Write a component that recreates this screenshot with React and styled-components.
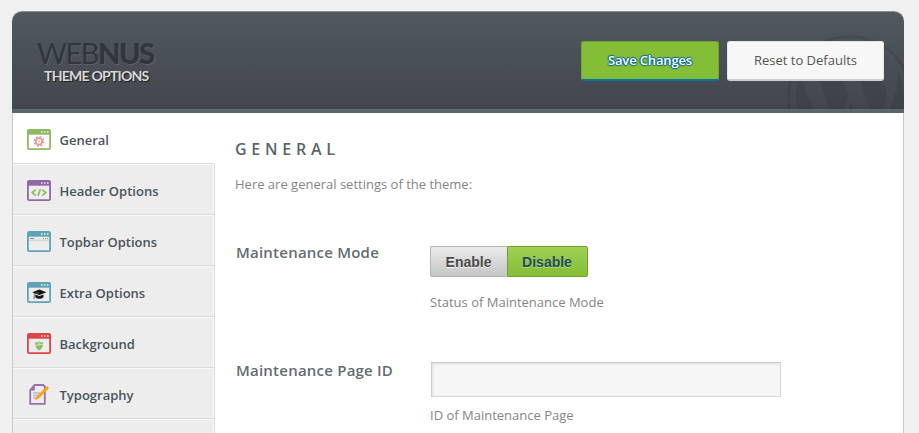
import React from "react";
import styled, { createGlobalStyle } from "styled-components";
import { FaWordpress } from "react-icons/fa";

const GlobalStyle = createGlobalStyle`
  * { box-sizing: border-box; }
  body {
    margin: 0;
    background: #f0f0f0;
    font-family: "Open Sans", sans-serif;
    overflow: hidden;
  }
`;

const Page = styled.div`
  height: 433px;
  padding: 11px 15px 0 12px;
  overflow: hidden;
`;

const Panel = styled.div`
  display: flex;
  flex-direction: column;
  height: 100%;
`;

const Header = styled.header`
  position: relative;
  display: flex;
  justify-content: space-between;
  align-items: flex-start;
  height: 102px;
  flex: none;
  padding: 29px 20px 0 25px;
  border-top: 1px solid #8b8f92;
  border-bottom: 4px solid #5b656b;
  border-radius: 10px 10px 0 0;
  background: linear-gradient(#50585e, #43464e);
  overflow: hidden;
`;

const Watermark = styled(FaWordpress)`
  position: absolute;
  top: 21px;
  right: -11px;
  width: 130px;
  height: 130px;
  color: rgba(20, 24, 34, 0.1);
`;

const Brand = styled.div`
  display: flex;
  flex-direction: column;
  font-family: Lato, sans-serif;
`;

const BrandName = styled.div`
  height: 26px;
  margin-top: -5px;
  font-size: 29px;
  line-height: 34px;
  letter-spacing: -1.5px;
  color: #32363a;
  text-shadow: 1px 1px 0 #596067;
  b { font-weight: 900; }
`;

const BrandSub = styled.div`
  margin: 5px 0 0 7px;
  font-size: 14px;
  line-height: 18px;
  font-weight: 700;
  letter-spacing: -0.75px;
  color: #d8d8d8;
  text-shadow: 1px 1px 1px #1c1f22;
`;

const Actions = styled.div`
  position: relative;
  display: flex;
  gap: 8px;
`;

const ActionButton = styled.button`
  width: ${(p) => (p.$primary ? 138 : 157)}px;
  height: 40px;
  padding: 0 0 2px;
  border: 1px solid ${(p) => (p.$primary ? "#72a52b" : "#e4e5e6")};
  border-bottom: 2px solid ${(p) => (p.$primary ? "#0074a2" : "#cdcfd0")};
  border-radius: 3px;
  background: ${(p) => (p.$primary ? "#84bd36" : "#f7f7f7")};
  color: ${(p) => (p.$primary ? "#fff" : "#555")};
  font: ${(p) => (p.$primary ? 600 : 400)} 13px "Open Sans", sans-serif;
  letter-spacing: ${(p) => (p.$primary ? "-0.15px" : "normal")};
  text-shadow: ${(p) => (p.$primary
    ? "0 -1px 1px #006799, 1px 0 1px #006799, 0 1px 1px #006799, -1px 0 1px #006799"
    : "none")};
`;

const Body = styled.div`
  display: flex;
  flex: 1;
  min-height: 0;
  border: solid #c9c9c9;
  border-width: 0 1px;
  background: #fff;
`;

const Sidebar = styled.nav`
  width: 202px;
  flex: none;
`;

const NavItem = styled.a`
  display: flex;
  align-items: center;
  gap: 8.5px;
  height: 51px;
  padding: 3px 0 0 14px;
  background: ${(p) => (p.$active ? "#fff" : "#ededed")};
  border-bottom: 1px solid #dcdcdc;
  border-right: 1px solid ${(p) => (p.$active ? "#fff" : "#dcdcdc")};
  box-shadow: ${(p) => (p.$active ? "none" : "inset -1px 1px 0 #f8f8f8")};
  color: #4a545b;
  font-size: 13px;
  font-weight: 600;
  svg { display: block; flex: none; }
`;

const Content = styled.main`
  flex: 1;
  padding: 26px 0 0 20px;
`;

const Title = styled.h1`
  margin: 0;
  font-size: 16px;
  line-height: 20px;
  font-weight: 600;
  letter-spacing: 4.75px;
  color: #5b646b;
`;

const Note = styled.p`
  margin: 0;
  font-size: 13px;
  line-height: 18px;
  color: #858585;
`;

const Intro = styled(Note)`
  margin-top: 16px;
`;

const Field = styled.div`
  display: grid;
  grid-template-columns: 195px 1fr;
  align-items: start;
  height: ${(p) => p.$height}px;
`;

const Fields = styled.div`
  margin-top: 53px;
`;

const Label = styled.label`
  margin-top: ${(p) => p.$shift}px;
  padding-left: 1px;
  font-size: 15px;
  line-height: 20px;
  font-weight: 600;
  letter-spacing: 0.22px;
  color: #646c71;
`;

const Toggle = styled.div`
  display: flex;
  width: 158px;
  height: 31px;
  margin-bottom: 16px;
`;

const ToggleOption = styled.button`
  width: ${(p) => (p.$on ? 81 : 77)}px;
  padding: 0 1px 0 0;
  border: 1px solid ${(p) => (p.$on ? "#70a12a" : "#b5b5b5")};
  border-right-width: ${(p) => (p.$on ? 1 : 0)}px;
  border-radius: ${(p) => (p.$on ? "0 2px 2px 0" : "2px 0 0 2px")};
  background: ${(p) => (p.$on
    ? "linear-gradient(#9fd155, #84bd36)"
    : "linear-gradient(#ebebeb, #c5c5c5)")};
  color: ${(p) => (p.$on ? "#234b60" : "#4b4b4b")};
  font: bold 14px "Liberation Sans", sans-serif;
  text-shadow: 0 1px 0 ${(p) => (p.$on ? "#b5dc7b" : "#f5f5f5")};
`;

const TextInput = styled.input`
  display: block;
  width: 350px;
  height: 35px;
  margin: 0 0 9px 1px;
  border: 1px solid #d9d9d9;
  border-top-color: #c8c8c8;
  border-left-color: #cdcdcd;
  background: #f6f6f6;
  box-shadow: inset 1px 1px 3px rgba(0, 0, 0, 0.09);
`;

function WindowIcon({ color, children, fill = "none" }) {
  return (
    <svg width="24" height="21" viewBox="0 0 24 21">
      <rect x="0.9" y="0.9" width="22.2" height="19.2" rx="1.2" fill={fill} stroke={color} strokeWidth="1.8" />
      <path d="M0.5 1h23v4.7h-23z" fill={color} />
      <path d="M14 2.2h1.5v1.5H14zM17 2.2h1.5v1.5H17zM20 2.2h1.5v1.5H20z" fill="#fff" opacity="0.85" />
      {children}
    </svg>
  );
}

const GeneralIcon = () => (
  <WindowIcon color="#8fb963">
    <g fill="none" stroke="#ed9390">
      <circle cx="12" cy="12.4" r="3.3" strokeWidth="1.7" />
      <circle cx="12" cy="12.4" r="4.7" strokeWidth="1.5" strokeDasharray="1.8 1.89" />
      <circle cx="12" cy="12.4" r="0.6" strokeWidth="0.8" />
    </g>
  </WindowIcon>
);

const HeaderIcon = () => (
  <WindowIcon color="#9168a5">
    <path d="M8.7 9.6l-3.4 3 3.4 3M15.3 9.6l3.4 3-3.4 3M13.4 9l-2.5 7" fill="none" stroke="#91bd61" strokeWidth="1.8" />
  </WindowIcon>
);

const TopbarIcon = () => (
  <WindowIcon color="#5ea4b6">
    <path d="M2 9.2h20" stroke="#c8cccd" strokeWidth="1" />
    <path d="M3 7.5h4M16 7.5h1M18 7.5h1M20 7.5h1" stroke="#888" strokeWidth="1" />
  </WindowIcon>
);

const ExtraIcon = () => (
  <WindowIcon color="#5ea4b6">
    <path d="M5.2 10.3l7.2-2.7 7 2.7-7 2.6z" fill="#111" />
    <path d="M8.3 12.5l4.1 1.4 4.1-1.4v2.7c-2.4 2-5.8 2-8.2 0z" fill="#1c1c1c" />
    <path d="M12.4 10.3l-5.1 1.2v5" fill="none" stroke="#555" strokeWidth="0.8" />
    <path d="M6.6 14.7h1.5v2.5H6.6z" fill="#999" />
  </WindowIcon>
);

const BackgroundIcon = () => (
  <WindowIcon color="#db4648">
    <path d="M8.2 9.1c1.2.8 2.3.2 3.9-.9 1.7 1.1 2.6 1.7 3.9.9.5 4-.6 6.7-3.9 8.4-3.1-1.5-4.3-4.3-3.9-8.4z" fill="#8fbd62" />
    <path d="M12 9.2v2.3l4.2-.2M8.5 12.2h3.8" fill="none" stroke="#ededed" strokeWidth="0.8" />
  </WindowIcon>
);

const TypographyIcon = () => (
  <svg width="24" height="21" viewBox="0 0 24 21">
    <path d="M7.5 1h8.7l1.6 1.5v17.4H3.2V6z" fill="none" stroke="#9670ab" strokeWidth="1.8" strokeLinejoin="round" />
    <path d="M3 6.4L7.8 1v5.4z" fill="#9670ab" />
    <path d="M6 9h7M6 11.5h8M6 14h6" stroke="#c7b0d3" strokeWidth="1.5" />
    <path d="M8 16.6l1.6-4.1L19.9 2.1l2.2 2.1L11.6 14.5z" fill="#f3a712" />
  </svg>
);

const sections = [
  ["General", GeneralIcon],
  ["Header Options", HeaderIcon],
  ["Topbar Options", TopbarIcon],
  ["Extra Options", ExtraIcon],
  ["Background", BackgroundIcon],
  ["Typography", TypographyIcon],
];

export default function App() {
  return (
    <Page>
      <GlobalStyle />
      <Panel>
        <Header>
          <Watermark />
          <Brand>
            <BrandName>WEB<b>NUS</b></BrandName>
            <BrandSub>THEME OPTIONS</BrandSub>
          </Brand>
          <Actions>
            <ActionButton $primary>Save Changes</ActionButton>
            <ActionButton>Reset to Defaults</ActionButton>
          </Actions>
        </Header>
        <Body>
          <Sidebar>
            {sections.map(([name, Icon], i) => (
              <NavItem key={name} $active={i === 0}>
                <Icon />
                {name}
              </NavItem>
            ))}
            <NavItem />
          </Sidebar>
          <Content>
            <Title>GENERAL</Title>
            <Intro>Here are general settings of the theme:</Intro>
            <Fields>
              <Field $height={116}>
                <Label $shift={-4}>Maintenance Mode</Label>
                <div>
                  <Toggle>
                    <ToggleOption>Enable</ToggleOption>
                    <ToggleOption $on>Disable</ToggleOption>
                  </Toggle>
                  <Note>Status of Maintenance Mode</Note>
                </div>
              </Field>
              <Field $height={80}>
                <Label $shift={-2} htmlFor="page-id">Maintenance Page ID</Label>
                <div>
                  <TextInput id="page-id" />
                  <Note>ID of Maintenance Page</Note>
                </div>
              </Field>
            </Fields>
          </Content>
        </Body>
      </Panel>
    </Page>
  );
}
